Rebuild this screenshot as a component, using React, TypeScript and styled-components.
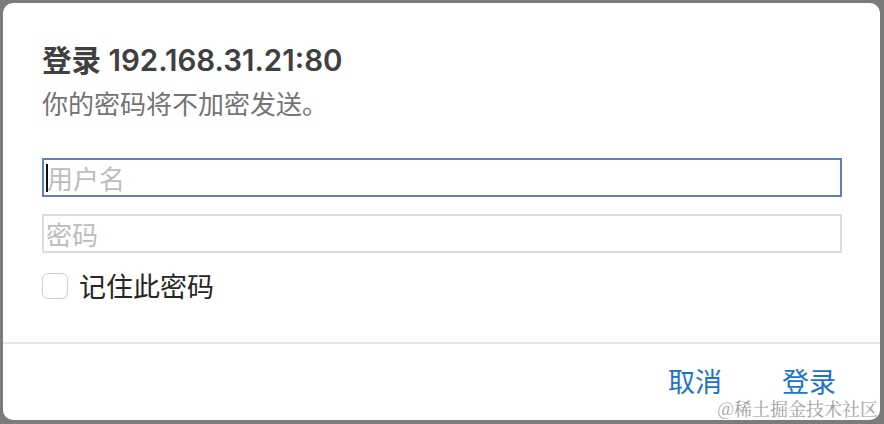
import React from 'react';
import styled, { createGlobalStyle } from 'styled-components';

const Global = createGlobalStyle`
  html, body {
    margin: 0;
    padding: 0;
    background: #7b7b7b;
  }
  body {
    font-family: 'Noto Sans CJK SC', 'Noto Sans', sans-serif;
  }
`;

const Page = styled.div`
  width: 884px;
  height: 424px;
  padding: 3px 4px 4px 3px;
  box-sizing: border-box;
`;

const Dialog = styled.div`
  position: relative;
  width: 877px;
  height: 417px;
  background: #fff;
  border-radius: 10px;
  display: flex;
  flex-direction: column;
  overflow: hidden;
`;

const Body = styled.div`
  padding: 36px 39px 0 39px;
  flex: 1;
`;

const Title = styled.div`
  font-family: Inter, 'Noto Sans CJK SC', sans-serif;
  font-size: 29.5px;
  font-weight: 600;
  color: #404040;
  line-height: 42px;
`;

const Sub = styled.div`
  margin-top: 4px;
  font-size: 26px;
  color: #747474;
  line-height: 36px;
`;

const Field = styled.div<{ $focus?: boolean }>`
  height: 39px;
  margin-top: ${p => (p.$focus ? '37px' : '17px')};
  width: 800px;
  box-sizing: border-box;
  border: 2px solid ${p => (p.$focus ? '#5d80bd' : '#dcdcdc')};
  display: flex;
  align-items: center;
  padding-left: 2px;
  font-size: 26px;
  line-height: 35px;
  color: #bdbdbd;
`;

const Caret = styled.span`
  width: 2px;
  height: 28px;
  background: #111;
  margin-right: -1px;
`;

const Remember = styled.label`
  display: flex;
  align-items: center;
  gap: 11px;
  margin-top: 20px;
  height: 26px;
  font-size: 27px;
  line-height: 26px;
  color: #262626;
`;

const Box = styled.span`
  width: 26px;
  height: 26px;
  box-sizing: border-box;
  border: 1px solid #cfcfcf;
  border-radius: 6px;
  background: #fff;
`;

const Footer = styled.div`
  height: 78px;
  border-top: 2px solid #e6e6e6;
  display: flex;
  justify-content: flex-end;
  align-items: flex-start;
  gap: 60px;
  padding: 23px 44px 0 0;
  box-sizing: border-box;
`;

const Btn = styled.span`
  font-size: 27px;
  color: #1b74cc;
  line-height: 28px;
`;

const Mark = styled.div`
  position: absolute;
  right: 2px;
  bottom: 0;
  font-family: 'Noto Serif CJK SC', 'Liberation Serif', serif;
  font-size: 18px;
  line-height: 23px;
  color: #a0a0a0;
`;

export default function App() {
  return (
    <Page>
      <Global />
      <Dialog>
        <Body>
          <Title>登录 192.168.31.21:80</Title>
          <Sub>你的密码将不加密发送。</Sub>
          <Field $focus>
            <Caret />
            用户名
          </Field>
          <Field>密码</Field>
          <Remember>
            <Box />
            记住此密码
          </Remember>
        </Body>
        <Footer>
          <Btn>取消</Btn>
          <Btn>登录</Btn>
        </Footer>
        <Mark>@稀土掘金技术社区</Mark>
      </Dialog>
    </Page>
  );
}
